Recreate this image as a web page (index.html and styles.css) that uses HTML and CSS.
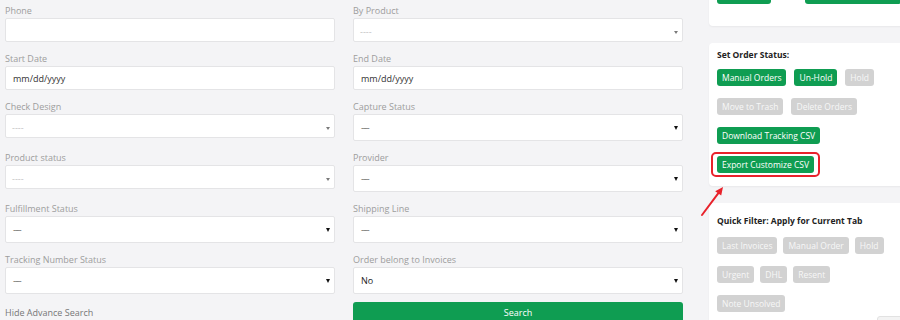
FILE: index.html
```html
<!DOCTYPE html>
<html>
    <head>
        <title>Orders: Advance Search</title>
        <link rel="stylesheet" href="styles.css">
    </head>
    <body>
        <div class="page">
            <form class="search-form">
                <div class="fields">
                    <div class="field">
                        <label>Phone</label>
                        <div class="control"></div>
                    </div>
                    <div class="field">
                        <label>By Product</label>
                        <div class="control picker"><span class="value">----</span><span class="caret"></span></div>
                    </div>

                    <div class="field">
                        <label>Start Date</label>
                        <div class="control">mm/dd/yyyy</div>
                    </div>
                    <div class="field">
                        <label>End Date</label>
                        <div class="control">mm/dd/yyyy</div>
                    </div>

                    <div class="field">
                        <label>Check Design</label>
                        <div class="control picker"><span class="value">----</span><span class="caret"></span></div>
                    </div>
                    <div class="field">
                        <label>Capture Status</label>
                        <div class="control select"><span class="value">----</span><span class="caret"></span></div>
                    </div>

                    <div class="field">
                        <label>Product status</label>
                        <div class="control picker"><span class="value">----</span><span class="caret"></span></div>
                    </div>
                    <div class="field">
                        <label>Provider</label>
                        <div class="control select"><span class="value">----</span><span class="caret"></span></div>
                    </div>

                    <div class="field">
                        <label>Fulfillment Status</label>
                        <div class="control select"><span class="value">----</span><span class="caret"></span></div>
                    </div>
                    <div class="field">
                        <label>Shipping Line</label>
                        <div class="control select"><span class="value">----</span><span class="caret"></span></div>
                    </div>

                    <div class="field">
                        <label>Tracking Number Status</label>
                        <div class="control select"><span class="value">----</span><span class="caret"></span></div>
                    </div>
                    <div class="field">
                        <label>Order belong to Invoices</label>
                        <div class="control select"><span class="value dark">No</span><span class="caret"></span></div>
                    </div>
                </div>

                <div class="form-foot">
                    <a class="toggle">Hide Advance Search</a>
                    <button type="button" class="btn-search">Search</button>
                </div>
            </form>

            <aside class="sidebar">
                <!-- only the bottom of this card is in view -->
                <div class="card card-top">
                    <button class="btn btn-a"></button>
                    <button class="btn btn-b"></button>
                </div>

                <div class="card card-status">
                    <div class="card-title">Set Order Status:</div>
                    <div class="btn-row first">
                        <button class="btn">Manual Orders</button>
                        <button class="btn">Un-Hold</button>
                        <button class="btn off">Hold</button>
                    </div>
                    <div class="btn-row">
                        <button class="btn off">Move to Trash</button>
                        <button class="btn off">Delete Orders</button>
                    </div>
                    <div class="btn-row">
                        <button class="btn">Download Tracking CSV</button>
                    </div>
                    <div class="btn-row">
                        <span class="highlight"><button class="btn">Export Customize CSV</button></span>
                    </div>
                </div>

                <div class="card card-filter">
                    <div class="card-title">Quick Filter: Apply for Current Tab</div>
                    <div class="btn-row first">
                        <button class="btn off">Last Invoices</button>
                        <button class="btn off">Manual Order</button>
                        <button class="btn off">Hold</button>
                    </div>
                    <div class="btn-row">
                        <button class="btn off">Urgent</button>
                        <button class="btn off">DHL</button>
                        <button class="btn off">Resent</button>
                    </div>
                    <div class="btn-row">
                        <button class="btn off">Note Unsolved</button>
                    </div>
                </div>
            </aside>
        </div>

        <!-- annotation arrow pointing at the highlighted button -->
        <svg class="pointer" width="36" height="40" viewBox="0 0 36 40">
            <line x1="7" y1="33" x2="23.2" y2="11.4" stroke="#e8222b" stroke-width="2" stroke-linecap="round"/>
            <polygon points="28,5 26.2,13.6 20.2,9.2" fill="#e8222b"/>
        </svg>

        <div class="to-top"></div>
    </body>
</html>
```

FILE: styles.css
```css
body {
    margin: 0;
    height: 320px;
    overflow: hidden;
    position: relative;
    background: #f4f4f6;
    font-family: "Open Sans", "Liberation Sans", sans-serif;
}

.page {
    display: flex;
    align-items: flex-start;
    padding-left: 5px;
}

/* search form */
.search-form {
    width: 678px;
    padding-top: 4px;
}

.fields {
    display: grid;
    grid-template-columns: 330px 330px;
    column-gap: 18px;
    row-gap: 10px;
}

.field label {
    display: block;
    font-size: 9px;
    line-height: 14px;
    color: #9d9d9d;
}

.control {
    box-sizing: border-box;
    height: 24px;
    display: flex;
    align-items: center;
    justify-content: space-between;
    padding: 0 7px;
    background: #fff;
    border: 1px solid #e4e4e6;
    border-radius: 2px;
    font-size: 9px;
    color: #333;
}

.control .caret {
    width: 0;
    height: 0;
    border-left: 2.5px solid transparent;
    border-right: 2.5px solid transparent;
    border-top: 4px solid #111;
}

.select {
    height: 27px;
    padding: 0 4px 0 7px;
}
.select .value { color: #666; letter-spacing: -1px; }
.select .value.dark { color: #222; letter-spacing: 0; }

.picker {
    height: 24px;
    padding: 0 4px 0 6px;
}
.picker .value {
    color: #c2c2c2;
    margin-top: 2px;
}
.picker .caret {
    align-self: flex-end;
    margin-bottom: 7px;
    border-top-color: #7a7a7a;
    border-top-width: 3px;
}

.form-foot {
    display: grid;
    grid-template-columns: 330px 330px;
    column-gap: 18px;
    margin-top: 8px;
}

.toggle {
    font-size: 9px;
    line-height: 22px;
    color: #777;
    cursor: pointer;
}

.btn-search {
    height: 24px;
    border: none;
    border-radius: 3px;
    background: #0f9d52;
    color: #fff;
    font-family: inherit;
    font-size: 9px;
    padding: 0 0 3px;
}

/* right column */
.sidebar {
    width: 200px;
    margin-left: 26px;
    margin-top: -21px;
    display: flex;
    flex-direction: column;
    gap: 17px;
}

.card {
    background: #fff;
    border-radius: 4px;
    box-shadow: 0 1px 2px rgba(0, 0, 0, .05);
}

.card-top {
    display: flex;
    gap: 34px;
    padding: 8px 8px 22px;
}
.card-top .btn-a { width: 61px; }
.card-top .btn-b { width: 110px; }

.card-status { padding: 6px 8px 13px; }
.card-filter { padding: 12px 8px 30px; }

.card-title {
    font-size: 8.5px;
    line-height: 12px;
    font-weight: 700;
    color: #222;
}

.btn-row {
    display: flex;
    align-items: center;
    gap: 8px;
    margin-top: 12px;
}
.btn-row.first { margin-top: 8px; }
.card-filter .btn-row { gap: 6px; }
.card-filter .btn-row.first { margin-top: 10px; }

.btn {
    height: 17px;
    padding: 0 5px;
    border: none;
    border-radius: 3px;
    background: #0f9d52;
    color: #fff;
    font-family: inherit;
    font-size: 8.5px;
    line-height: 17px;
    white-space: nowrap;
}

.btn.off {
    background: #d2d2d2;
    color: #f7f7f7;
}

.highlight {
    display: inline-flex;
    margin: -4px -6px;
    padding: 2px 4px;
    border: 2px solid #e8222b;
    border-radius: 5px;
}

/* overlays */
.pointer {
    position: absolute;
    left: 695px;
    top: 182px;
}

.to-top {
    position: absolute;
    left: 877px;
    top: 316px;
    width: 40px;
    height: 20px;
    background: #f3f3f3;
    border: 1px solid #e2e2e2;
    border-radius: 3px;
}
```
